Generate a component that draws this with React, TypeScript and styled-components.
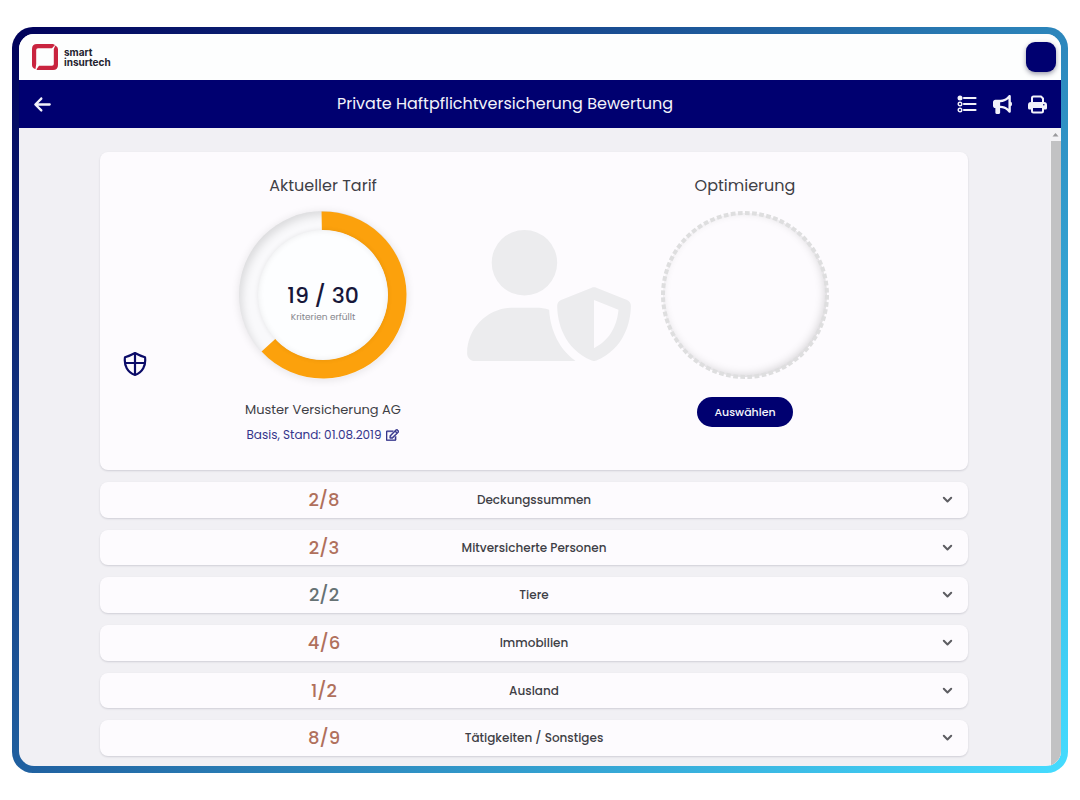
import React from 'react';
import styled, { createGlobalStyle } from 'styled-components';
import { FaArrowLeft, FaBullhorn, FaUserShield } from 'react-icons/fa6';
import { FaRegEdit } from 'react-icons/fa';

const GlobalStyle = createGlobalStyle`
  *, *::before, *::after { box-sizing: border-box; }
  body {
    margin: 0;
    background: #ffffff;
    color: #3f3f46;
    font-family: Poppins, Inter, sans-serif;
  }
  button { font-family: inherit; cursor: pointer; }
  h1, h2, p { margin: 0; font-weight: 400; }
`;

const Page = styled.div`
  display: flex;
  min-height: 100vh;
  padding: 27px 12px;
`;

const Frame = styled.div`
  display: flex;
  flex: 1;
  padding: 7px;
  border-radius: 21px;
  background: linear-gradient(135deg, #00005a 0%, #2a7fb6 55%, #45dcff 100%);
`;

const Screen = styled.div`
  display: flex;
  flex: 1;
  flex-direction: column;
  overflow: hidden;
  border-radius: 15px;
  background: #f1f0f4;
`;

const BrandBar = styled.header`
  display: flex;
  align-items: center;
  justify-content: space-between;
  height: 46px;
  padding: 0 5px 0 13px;
  background: #fdfefe;
`;

const Brand = styled.a`
  display: flex;
  align-items: center;
  gap: 6px;
  color: #23232f;
  text-decoration: none;
`;

const BrandName = styled.span`
  display: flex;
  flex-direction: column;
  font-family: Inter, sans-serif;
  font-size: 10px;
  font-weight: 700;
  line-height: 10px;
`;

const AccountButton = styled.button`
  width: 30px;
  height: 30px;
  border: 0;
  border-radius: 9px;
  background: #000070;
  box-shadow: 0 2px 5px rgba(0, 0, 40, 0.4);
`;

const TitleBar = styled.nav`
  display: grid;
  grid-template-columns: 104px 1fr 104px;
  align-items: center;
  height: 48px;
  padding: 0 14px;
  background: #000070;
  color: #f2f2fa;
`;

const Title = styled.h1`
  padding-right: 70px;
  font-size: 16px;
  line-height: 24px;
  text-align: center;
`;

const Tools = styled.div`
  display: flex;
  align-items: center;
  justify-content: flex-end;
  gap: 16px;
`;

const IconButton = styled.button`
  display: flex;
  padding: 0;
  border: 0;
  background: none;
  color: inherit;
`;

const Viewport = styled.div`
  display: flex;
  flex: 1;
`;

const Content = styled.main`
  display: flex;
  flex: 1;
  flex-direction: column;
  gap: 12px;
  padding: 24px 82px 10px 81px;
`;

const ScrollTrack = styled.div`
  display: flex;
  flex-direction: column;
  align-items: center;
  width: 11px;
  padding-top: 5px;
  background: #f4f3f5;
`;

const ScrollThumb = styled.div`
  flex: 1;
  width: 10px;
  margin-top: 4px;
  background: #c2c2c3;
`;

const Card = styled.section`
  border-radius: 8px;
  background: #fdfbfe;
  box-shadow: 0 1px 2px rgba(40, 40, 60, 0.16);
`;

const Summary = styled(Card)`
  display: grid;
  grid-template-columns: 1fr 168px 254px 168px 1fr;
  height: 318px;
  padding-top: 20px;
`;

const ProductIcon = styled.div`
  padding: 179px 0 0 23px;
  color: #0b0b68;
`;

const Tariff = styled.div`
  display: flex;
  flex-direction: column;
  align-items: center;
  white-space: nowrap;
`;

const TariffTitle = styled.h2`
  margin-bottom: 12px;
  font-size: 16px;
  line-height: 27px;
`;

const GaugeBox = styled.div`
  display: grid;
  place-items: center;
  width: 168px;
  height: 168px;
  border-radius: 50%;
  background: #f9f9fb;
  box-shadow: inset 3px 4px 8px rgba(0, 0, 0, 0.12), 0 1px 8px rgba(0, 0, 0, 0.1);

  > * { grid-area: 1 / 1; }
`;

const GaugeFace = styled.div`
  display: flex;
  flex-direction: column;
  align-items: center;
  justify-content: center;
  width: 130px;
  height: 130px;
  padding-top: 14px;
  border-radius: 50%;
  background: #fdfeff;
  box-shadow: 0 0 5px rgba(0, 0, 0, 0.08), inset 0 0 6px rgba(0, 0, 0, 0.08);
`;

const GaugeValue = styled.strong`
  color: #17173a;
  font-size: 22px;
  font-weight: 500;
  line-height: 29px;
`;

const GaugeCaption = styled.span`
  color: #85858c;
  font-size: 9px;
  line-height: 14px;
`;

const Insurer = styled.p`
  margin-top: 19px;
  font-size: 13px;
  line-height: 24px;
`;

const TariffLink = styled.a`
  display: flex;
  align-items: center;
  gap: 5px;
  color: #35358c;
  font-size: 12px;
  line-height: 26px;
  text-decoration: none;
`;

const EditIcon = styled(FaRegEdit)`
  width: 13px;
  height: 12px;
  stroke: currentColor;
  stroke-width: 20px;
`;

const PersonCell = styled.div`
  display: flex;
  align-items: flex-start;
  justify-content: flex-end;
  padding: 58px 30px 0 0;
`;

const PersonIcon = styled(FaUserShield)`
  width: 164px;
  height: 131px;
  color: #ececee;
`;

const EmptyGauge = styled.div`
  display: grid;
  place-items: center;
  width: 168px;
  height: 168px;

  > * { grid-area: 1 / 1; }
`;

const EmptyFace = styled.div`
  width: 164px;
  height: 164px;
  border-radius: 50%;
  box-shadow: inset -2px -2px 10px rgba(0, 0, 0, 0.17);
`;

const SelectButton = styled.button`
  height: 30px;
  margin-top: 18px;
  padding: 0 17px;
  border: 0;
  border-radius: 15px;
  background: #000070;
  color: #f5f5fc;
  font-size: 11px;
  font-weight: 500;
`;

const Criteria = styled.div`
  display: flex;
  flex: 1;
  flex-direction: column;
  gap: 12px;
`;

const CriteriaRow = styled(Card).attrs({ as: 'button', type: 'button' })`
  display: grid;
  flex: 1;
  grid-template-columns: 1fr 168px 254px 168px 1fr;
  align-items: center;
  min-height: 35px;
  padding: 0;
  border: 0;
  color: #3f3f46;
`;

const Score = styled.span<{ $complete: boolean }>`
  grid-column: 2;
  padding-left: 2px;
  color: ${({ $complete }) => ($complete ? '#667274' : '#b0705c')};
  font-size: 18px;
  font-weight: 500;
  line-height: 24px;
`;

const RowLabel = styled.span`
  font-size: 12px;
  font-weight: 500;
  line-height: 18px;
`;

const RowChevron = styled.span`
  display: flex;
  grid-column: 5;
  justify-content: flex-end;
  padding-right: 15px;
  color: #5d5d62;
`;

const Logo = () => (
  <svg width="26" height="26" viewBox="0 0 26 26" aria-hidden="true">
    <path
      d="M5 0H21L23 1L20 4.200H6Q4.200 4.200 4.200 6V20L3.500 25Q0 24 0 21V5Q0 0 5 0Z"
      fill="#c9243f"
    />
    <path
      d="M21 26H5L4.500 25.200L7 21.800H20Q21.800 21.800 21.800 20V5L23.200 1.500Q26 2.500 26 5V21Q26 26 21 26Z"
      fill="#c9243f"
    />
  </svg>
);

const ListIcon = () => (
  <svg width="20" height="18" viewBox="0 0 20 18" fill="none" stroke="currentColor" aria-hidden="true">
    <circle cx="3" cy="3" r="2.5" fill="currentColor" stroke="none" />
    <circle cx="3" cy="9" r="1.8" strokeWidth="1.4" />
    <circle cx="3" cy="15" r="1.8" strokeWidth="1.4" />
    <path d="M7 3H18.500M7 9H18.500M7 15H18.500" strokeWidth="2.2" strokeLinecap="round" />
  </svg>
);

const PrintIcon = () => (
  <svg width="19" height="19" viewBox="0 0 19 19" fill="none" stroke="currentColor" strokeWidth="2" strokeLinejoin="round" aria-hidden="true">
    <path d="M4 8V3Q4 1.500 5.500 1.500H13L15 3.500V8" />
    <path
      d="M3 7H16Q19 7 19 10V13Q19 14.500 17.500 14.500H16V12H3V14.500H1.500Q0 14.500 0 13V10Q0 7 3 7Z"
      fill="currentColor"
      stroke="none"
    />
    <path d="M4 12V16Q4 17.500 5.500 17.500H13.500Q15 17.500 15 16V12Z" />
    <circle cx="15.800" cy="9.800" r="0.800" fill="#000070" stroke="none" />
  </svg>
);

const ChevronIcon = () => (
  <svg width="11" height="8" viewBox="0 0 11 8" fill="none" stroke="currentColor" strokeWidth="2" strokeLinecap="round" strokeLinejoin="round" aria-hidden="true">
    <path d="M1.800 1.800L5.500 5.500L9.200 1.800" />
  </svg>
);

const ShieldIcon = () => (
  <svg width="24" height="26" viewBox="0 0 24 26" fill="none" stroke="currentColor" strokeWidth="2.2" strokeLinejoin="round" aria-hidden="true">
    <path d="M12 2Q17 4.800 22 6.200C23.200 14.500 19.500 21.500 12 24C4.500 21.500 0.800 14.500 2 6.200Q7 4.800 12 2Z" />
    <path d="M12 2V24M2 12H22" />
  </svg>
);

const CRITERIA_TOTAL = 30;
const CRITERIA_MET = 19;
const RADIUS = 74;
const CIRCUMFERENCE = 2 * Math.PI * RADIUS;

const Arc = () => (
  <svg width="168" height="168" viewBox="0 0 168 168" fill="none" aria-hidden="true">
    <circle
      cx="84"
      cy="84"
      r={RADIUS}
      stroke="#fca10c"
      strokeWidth="19"
      strokeDasharray={`${(CIRCUMFERENCE * CRITERIA_MET) / CRITERIA_TOTAL} ${CIRCUMFERENCE}`}
      transform="rotate(-91 84 84)"
    />
  </svg>
);

const DashedRing = () => (
  <svg width="168" height="168" viewBox="0 0 168 168" fill="none" aria-hidden="true">
    <circle cx="84" cy="84" r="82" stroke="#dededf" strokeWidth="4" pathLength="180" strokeDasharray="1.650 0.850" />
  </svg>
);

const criteria = [
  { label: 'Deckungssummen', met: 2, total: 8 },
  { label: 'Mitversicherte Personen', met: 2, total: 3 },
  { label: 'Tiere', met: 2, total: 2 },
  { label: 'Immobilien', met: 4, total: 6 },
  { label: 'Ausland', met: 1, total: 2 },
  { label: 'Tätigkeiten / Sonstiges', met: 8, total: 9 },
];

export default function App() {
  return (
    <>
      <GlobalStyle />
      <Page>
        <Frame>
          <Screen>
            <BrandBar>
              <Brand href="#">
                <Logo />
                <BrandName>
                  <span>smart</span>
                  <span>insurtech</span>
                </BrandName>
              </Brand>
              <AccountButton aria-label="Konto" />
            </BrandBar>
            <TitleBar>
              <IconButton aria-label="Zurück">
                <FaArrowLeft size={19} />
              </IconButton>
              <Title>Private Haftpflichtversicherung Bewertung</Title>
              <Tools>
                <IconButton aria-label="Liste">
                  <ListIcon />
                </IconButton>
                <IconButton aria-label="Mitteilungen">
                  <FaBullhorn size={19} />
                </IconButton>
                <IconButton aria-label="Drucken">
                  <PrintIcon />
                </IconButton>
              </Tools>
            </TitleBar>
            <Viewport>
              <Content>
                <Summary>
                  <ProductIcon>
                    <ShieldIcon />
                  </ProductIcon>
                  <Tariff>
                    <TariffTitle>Aktueller Tarif</TariffTitle>
                    <GaugeBox>
                      <Arc />
                      <GaugeFace>
                        <GaugeValue>
                          {CRITERIA_MET} / {CRITERIA_TOTAL}
                        </GaugeValue>
                        <GaugeCaption>Kriterien erfüllt</GaugeCaption>
                      </GaugeFace>
                    </GaugeBox>
                    <Insurer>Muster Versicherung AG</Insurer>
                    <TariffLink href="#">
                      Basis, Stand: 01.08.2019
                      <EditIcon />
                    </TariffLink>
                  </Tariff>
                  <PersonCell>
                    <PersonIcon />
                  </PersonCell>
                  <Tariff>
                    <TariffTitle>Optimierung</TariffTitle>
                    <EmptyGauge>
                      <EmptyFace />
                      <DashedRing />
                    </EmptyGauge>
                    <SelectButton>Auswählen</SelectButton>
                  </Tariff>
                </Summary>
                <Criteria>
                  {criteria.map(({ label, met, total }) => (
                    <CriteriaRow key={label}>
                      <Score $complete={met === total}>
                        {met}/{total}
                      </Score>
                      <RowLabel>{label}</RowLabel>
                      <RowChevron>
                        <ChevronIcon />
                      </RowChevron>
                    </CriteriaRow>
                  ))}
                </Criteria>
              </Content>
              <ScrollTrack aria-hidden="true">
                <svg width="7" height="4" viewBox="0 0 7 4">
                  <path d="M3.500 0L6.500 3.500H0.500Z" fill="#9a9a9c" />
                </svg>
                <ScrollThumb />
              </ScrollTrack>
            </Viewport>
          </Screen>
        </Frame>
      </Page>
    </>
  );
}
